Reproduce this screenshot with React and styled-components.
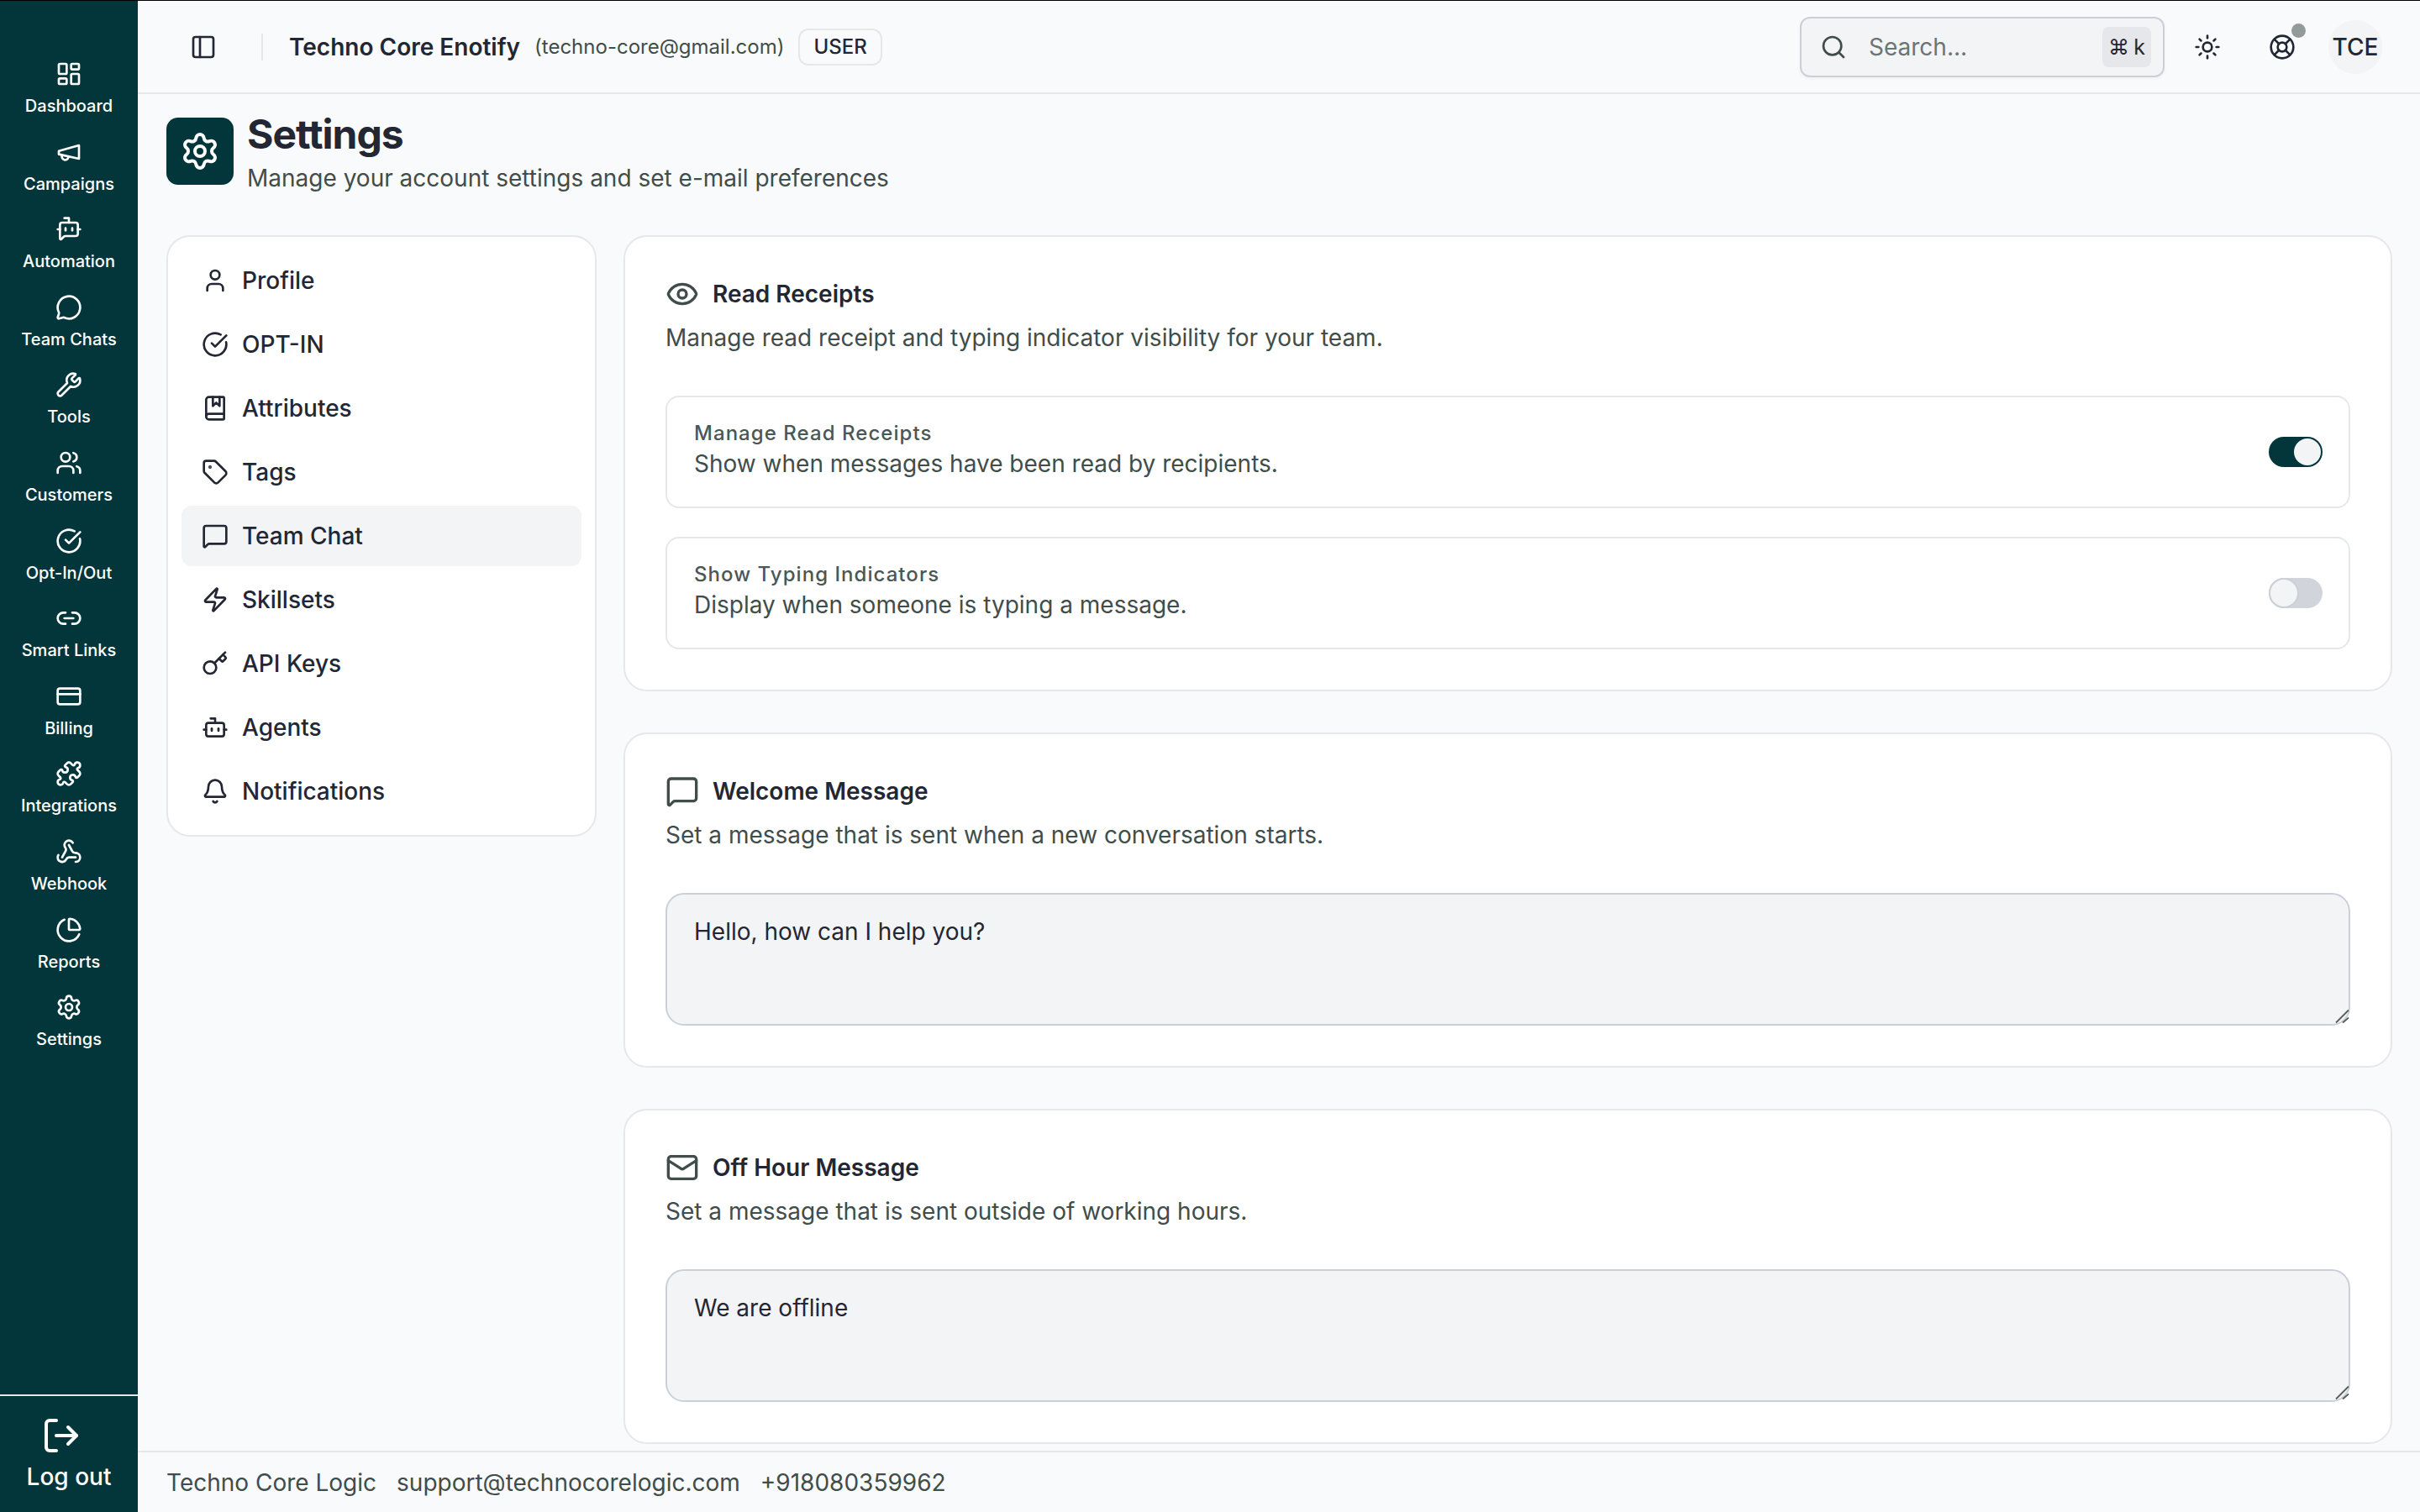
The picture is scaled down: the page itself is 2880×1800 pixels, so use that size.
import React from "react";
import styled, { createGlobalStyle } from "styled-components";
import {
  LayoutDashboard, BotMessageSquare, MessageCircle, Wrench, Users, CircleCheckBig,
  Link2, CreditCard, Puzzle, Webhook, ChartPie, Settings, LogOut, User, BookMarked, Tag,
  MessageSquare, Zap, Key, Bot, Bell, Eye, Mail, PanelLeft, Search, Sun, LifeBuoy,
} from "lucide-react";

const Global = createGlobalStyle`
  * { box-sizing: border-box; }
  html, body { margin: 0; padding: 0; height: 100%; overflow: hidden; }
  body { font-family: Inter, "Liberation Sans", sans-serif; background: #f9fafb; color: #232733; }
`;

const Shell = styled.div`
  display: flex;
  height: 1800px;
  width: 2880px;
  border-top: 1px solid #000;
  overflow: hidden;
`;

const Rail = styled.aside`
  width: 164px;
  flex: none;
  background: #02363a;
  display: flex;
  flex-direction: column;
  color: #fff;
`;

const RailNav = styled.nav`
  flex: 1;
  display: flex;
  flex-direction: column;
  gap: 22.6px;
  padding-top: 69px;
`;

const RailItem = styled.a`
  display: flex;
  flex: none;
  flex-direction: column;
  align-items: center;
  gap: 6px;
  height: 70px;
`;

const RailIcon = styled.span`
  flex: none;
  height: 36px;
  display: flex;
  align-items: center;
  justify-content: center;
`;

const RailLabel = styled.span`
  font-size: 20px;
  line-height: 28px;
  font-weight: 500;
  white-space: nowrap;
`;

const Logout = styled.div`
  height: 140px;
  border-top: 2px solid #e5e7eb;
  display: flex;
  flex-direction: column;
  align-items: center;
  padding-top: 23px;
  gap: 7px;
  svg { margin-right: 18px; }
`;

const LogoutLabel = styled.span`
  font-size: 28px;
  line-height: 36px;
  font-weight: 500;
`;

const Main = styled.div`
  flex: 1;
  min-width: 0;
  display: flex;
  flex-direction: column;
`;

const TopBar = styled.header`
  height: 111px;
  flex: none;
  border-bottom: 2px solid #e5e7eb;
  display: flex;
  align-items: center;
  padding: 0 45px 0 62px;
`;

const IconButton = styled.span`
  display: flex;
  width: 32px;
  height: 32px;
  margin-left: ${(p) => p.$gap || 0}px;
  color: #232733;
  position: relative;
`;

const Rule = styled.span`
  width: 2px;
  height: 32px;
  background: #e5e7eb;
  margin: 0 31px 0 53px;
`;

const Company = styled.span`
  font-size: 28px;
  font-weight: 600;
  white-space: nowrap;
`;

const Email = styled.span`
  font-size: 24px;
  color: #404d4a;
  margin-left: 17px;
  white-space: nowrap;
`;

const RoleBadge = styled.span`
  margin-left: 17px;
  height: 44px;
  padding: 0 16px;
  border: 2px solid #e5e7eb;
  border-radius: 12px;
  display: flex;
  align-items: center;
  font-size: 24px;
  font-weight: 500;
`;

const SearchBox = styled.div`
  margin-left: auto;
  width: 434px;
  height: 72px;
  border: 2px solid #cbd0d8;
  border-radius: 12px;
  background: #f3f4f6;
  box-shadow: 0 2px 4px rgba(0, 0, 0, 0.04);
  display: flex;
  align-items: center;
  padding: 0 14px 0 22px;
  color: #404d4a;
`;

const SearchHint = styled.span`
  margin-left: 26px;
  font-size: 28px;
  color: #6b7572;
`;

const Kbd = styled.span`
  margin-left: auto;
  width: 58px;
  height: 48px;
  border-radius: 8px;
  background: #e5e7eb;
  display: flex;
  align-items: center;
  justify-content: center;
  gap: 5px;
  font-size: 25px;
  color: #232733;
`;

const Actions = styled.div`
  display: flex;
  align-items: center;
`;

const Dot = styled.span`
  position: absolute;
  top: -12px;
  right: -12px;
  width: 17px;
  height: 17px;
  border-radius: 50%;
  background: #939a9a;
`;

const Avatar = styled.span`
  width: 64px;
  height: 64px;
  margin-left: 39px;
  border-radius: 50%;
  background: #f3f4f6;
  display: flex;
  align-items: center;
  justify-content: center;
  font-size: 28px;
  font-weight: 500;
`;

const Scroll = styled.main`
  flex: 1;
  min-height: 0;
  overflow: hidden;
  padding: 28px 33px 0 34px;
`;

const PageHead = styled.div`
  display: flex;
  gap: 16px;
  height: 80px;
  margin-bottom: 60px;
`;

const PageIcon = styled.span`
  width: 80px;
  height: 80px;
  border-radius: 14px;
  background: #02363a;
  color: #fff;
  display: flex;
  align-items: center;
  justify-content: center;
`;

const PageTitle = styled.h1`
  margin: -8px 0 0;
  font-size: 48px;
  line-height: 56px;
  font-weight: 700;
  letter-spacing: -1px;
`;

const PageSub = styled.p`
  margin: 4px 0 0;
  font-size: 28px;
  line-height: 40px;
  color: #404d4a;
`;

const Columns = styled.div`
  display: grid;
  grid-template-columns: 512px 1fr;
  gap: 32px;
  align-items: start;
`;

const SideCard = styled.nav`
  background: #fff;
  border: 2px solid #e5e7eb;
  border-radius: 28px;
  padding: 16px;
  display: flex;
  flex-direction: column;
  gap: 4px;
`;

const SideItem = styled.a`
  height: 72px;
  border-radius: 12px;
  padding-left: 24px;
  display: flex;
  align-items: center;
  gap: 16px;
  font-size: 28px;
  font-weight: 500;
  background: ${(p) => (p.$active ? "#f3f4f6" : "transparent")};
`;

const Stack = styled.div`
  display: flex;
  flex-direction: column;
  gap: 49px;
`;

const Card = styled.section`
  background: #fff;
  border: 2px solid #e5e7eb;
  border-radius: 28px;
  padding: 48px;
`;

const CardHead = styled.div`
  display: flex;
  align-items: center;
  gap: 16px;
  height: 40px;
  color: #404d4a;
`;

const CardTitle = styled.h2`
  margin: 0;
  font-size: 28px;
  font-weight: 600;
  color: #232733;
`;

const CardText = styled.p`
  margin: 10px 0 0;
  font-size: 28px;
  line-height: 44px;
  color: #404d4a;
`;

const Rows = styled.div`
  margin-top: 47px;
  display: flex;
  flex-direction: column;
  gap: 34px;
`;

const Row = styled.div`
  height: 134px;
  border: 2px solid #e5e7eb;
  border-radius: 16px;
  padding: 0 31px 0 32px;
  display: flex;
  align-items: center;
  justify-content: space-between;
`;

const RowCopy = styled.div`
  margin-bottom: 4px;
`;

const RowLabel = styled.div`
  font-size: 24px;
  line-height: 32px;
  font-weight: 500;
  letter-spacing: 1.05px;
  color: #4b5755;
`;

const RowText = styled.div`
  font-size: 28px;
  line-height: 40px;
  color: #404d4a;
`;

const Toggle = styled.span`
  width: 64px;
  height: 36px;
  border-radius: 18px;
  padding: 2px;
  display: flex;
  justify-content: ${(p) => (p.$on ? "flex-end" : "flex-start")};
  background: ${(p) => (p.$on ? "#02363a" : "#d1d5db")};
`;

const Thumb = styled.span`
  width: 32px;
  height: 32px;
  border-radius: 50%;
  background: #f3f4f6;
  box-shadow: ${(p) => (p.$on ? "none" : "0 0 0 2px #cbd0d8")};
`;

const AreaWrap = styled.div`
  position: relative;
  margin-top: 47px;
`;

const Area = styled.textarea`
  display: block;
  width: 100%;
  height: 158px;
  padding: 24px 32px;
  border: 2px solid #cbd0d8;
  border-radius: 22px;
  background: #f3f4f6;
  font-family: Inter, "Liberation Sans", sans-serif;
  font-size: 28px;
  line-height: 40px;
  color: #232733;
  resize: none;
  outline: none;
`;

const Grip = styled.svg`
  position: absolute;
  right: 0;
  bottom: 0;
  width: 20px;
  height: 20px;
  pointer-events: none;
`;

const Foot = styled.footer`
  height: 73px;
  flex: none;
  border-top: 2px solid #e5e7eb;
  display: flex;
  align-items: center;
  gap: 24px;
  padding: 0 34px;
  font-size: 28px;
  color: #404d4a;
`;

function OldMegaphone({ size }) {
  return (
    <svg width={size} height={size} viewBox="0 0 24 24" fill="none" stroke="currentColor" strokeWidth="2" strokeLinecap="round" strokeLinejoin="round">
      <path d="m3 11 18-5v12L3 14v-3z" />
      <path d="M11.6 16.8a3 3 0 1 1-5.8-1.6" />
    </svg>
  );
}

const railItems = [
  [LayoutDashboard, "Dashboard"], [OldMegaphone, "Campaigns"], [BotMessageSquare, "Automation"],
  [MessageCircle, "Team Chats"], [Wrench, "Tools"], [Users, "Customers"], [CircleCheckBig, "Opt-In/Out"],
  [Link2, "Smart Links"], [CreditCard, "Billing"], [Puzzle, "Integrations"], [Webhook, "Webhook"],
  [ChartPie, "Reports"], [Settings, "Settings"],
];

const sideItems = [
  [User, "Profile"], [CircleCheckBig, "OPT-IN"], [BookMarked, "Attributes"], [Tag, "Tags"],
  [MessageSquare, "Team Chat", true], [Zap, "Skillsets"], [Key, "API Keys"], [Bot, "Agents"], [Bell, "Notifications"],
];

function ToggleRow({ label, text, on }) {
  return (
    <Row>
      <RowCopy>
        <RowLabel>{label}</RowLabel>
        <RowText>{text}</RowText>
      </RowCopy>
      <Toggle $on={on}><Thumb $on={on} /></Toggle>
    </Row>
  );
}

function MessageCard({ icon: Icon, title, text, value }) {
  return (
    <Card>
      <CardHead><Icon size={40} /><CardTitle>{title}</CardTitle></CardHead>
      <CardText>{text}</CardText>
      <AreaWrap>
        <Area defaultValue={value} />
        <Grip viewBox="0 0 20 20" fill="none" stroke="#555f5e" strokeWidth="1.8">
          <path d="M3 16.5 18 1.5M11 16.5l7-6" />
        </Grip>
      </AreaWrap>
    </Card>
  );
}

export default function App() {
  return (
    <>
      <Global />
      <Shell>
        <Rail>
          <RailNav>
            {railItems.map(([Icon, label]) => (
              <RailItem key={label}>
                <RailIcon><Icon size={32} /></RailIcon>
                <RailLabel>{label}</RailLabel>
              </RailItem>
            ))}
          </RailNav>
          <Logout>
            <LogOut size={48} />
            <LogoutLabel>Log out</LogoutLabel>
          </Logout>
        </Rail>
        <Main>
          <TopBar>
            <IconButton><PanelLeft size={32} /></IconButton>
            <Rule />
            <Company>Techno Core Enotify</Company>
            <Email>(techno-core@gmail.com)</Email>
            <RoleBadge>USER</RoleBadge>
            <SearchBox>
              <Search size={32} />
              <SearchHint>Search...</SearchHint>
              <Kbd><span>⌘</span><span>k</span></Kbd>
            </SearchBox>
            <Actions>
              <IconButton $gap={35}><Sun size={32} /></IconButton>
              <IconButton $gap={57}><LifeBuoy size={32} /><Dot /></IconButton>
              <Avatar>TCE</Avatar>
            </Actions>
          </TopBar>
          <Scroll>
            <PageHead>
              <PageIcon><Settings size={48} /></PageIcon>
              <div>
                <PageTitle>Settings</PageTitle>
                <PageSub>Manage your account settings and set e-mail preferences</PageSub>
              </div>
            </PageHead>
            <Columns>
              <SideCard>
                {sideItems.map(([Icon, label, active]) => (
                  <SideItem key={label} $active={active}><Icon size={32} />{label}</SideItem>
                ))}
              </SideCard>
              <Stack>
                <Card>
                  <CardHead><Eye size={40} /><CardTitle>Read Receipts</CardTitle></CardHead>
                  <CardText>Manage read receipt and typing indicator visibility for your team.</CardText>
                  <Rows>
                    <ToggleRow on label="Manage Read Receipts" text="Show when messages have been read by recipients." />
                    <ToggleRow label="Show Typing Indicators" text="Display when someone is typing a message." />
                  </Rows>
                </Card>
                <MessageCard icon={MessageSquare} title="Welcome Message" text="Set a message that is sent when a new conversation starts." value="Hello, how can I help you?" />
                <MessageCard icon={Mail} title="Off Hour Message" text="Set a message that is sent outside of working hours." value="We are offline" />
              </Stack>
            </Columns>
          </Scroll>
          <Foot>
            <span>Techno Core Logic</span>
            <span>support@technocorelogic.com</span>
            <span>+918080359962</span>
          </Foot>
        </Main>
      </Shell>
    </>
  );
}
